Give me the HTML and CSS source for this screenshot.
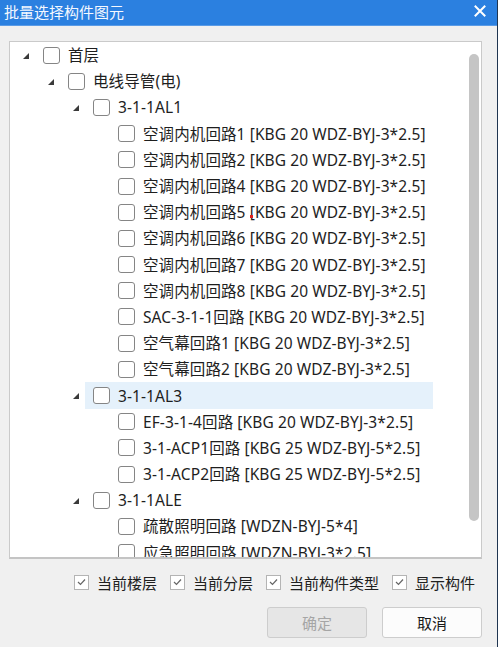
FILE: index.html
```html
<!DOCTYPE html>
<html>
<head>
<meta charset="utf-8">
<link rel="stylesheet" href="styles.css">
</head>
<body>
<div class="window">
  <div class="titlebar">
    <span class="title">批量选择构件图元</span>
    <svg class="close" width="12" height="12" viewBox="0 0 12 12"><path d="M1.5 1.5 L10.5 10.5 M10.5 1.5 L1.5 10.5" stroke="#fff" stroke-width="2" stroke-linecap="square"/></svg>
  </div>
  <div class="content">
    <div class="panel">
      <div class="tree">
        <div class="row l0"><span class="arrow"></span><span class="item"><span class="cb"></span><span class="label">首层</span></span></div>
        <div class="row l1"><span class="arrow"></span><span class="item"><span class="cb"></span><span class="label">电线导管(电)</span></span></div>
        <div class="row l2"><span class="arrow"></span><span class="item"><span class="cb"></span><span class="label">3-1-1AL1</span></span></div>
        <div class="row leaf"><span class="item"><span class="cb"></span><span class="label">空调内机回路1 [KBG 20 WDZ-BYJ-3*2.5]</span></span></div>
        <div class="row leaf"><span class="item"><span class="cb"></span><span class="label">空调内机回路2 [KBG 20 WDZ-BYJ-3*2.5]</span></span></div>
        <div class="row leaf"><span class="item"><span class="cb"></span><span class="label">空调内机回路4 [KBG 20 WDZ-BYJ-3*2.5]</span></span></div>
        <div class="row leaf"><span class="item"><span class="cb"></span><span class="label">空调内机回路5 [KBG 20 WDZ-BYJ-3*2.5]</span></span><span class="dot"></span></div>
        <div class="row leaf"><span class="item"><span class="cb"></span><span class="label">空调内机回路6 [KBG 20 WDZ-BYJ-3*2.5]</span></span></div>
        <div class="row leaf"><span class="item"><span class="cb"></span><span class="label">空调内机回路7 [KBG 20 WDZ-BYJ-3*2.5]</span></span></div>
        <div class="row leaf"><span class="item"><span class="cb"></span><span class="label">空调内机回路8 [KBG 20 WDZ-BYJ-3*2.5]</span></span></div>
        <div class="row leaf"><span class="item"><span class="cb"></span><span class="label">SAC-3-1-1回路 [KBG 20 WDZ-BYJ-3*2.5]</span></span></div>
        <div class="row leaf"><span class="item"><span class="cb"></span><span class="label">空气幕回路1 [KBG 20 WDZ-BYJ-3*2.5]</span></span></div>
        <div class="row leaf"><span class="item"><span class="cb"></span><span class="label">空气幕回路2 [KBG 20 WDZ-BYJ-3*2.5]</span></span></div>
        <div class="row l2"><span class="arrow"></span><span class="item sel"><span class="cb"></span><span class="label">3-1-1AL3</span></span></div>
        <div class="row leaf"><span class="item"><span class="cb"></span><span class="label">EF-3-1-4回路 [KBG 20 WDZ-BYJ-3*2.5]</span></span></div>
        <div class="row leaf"><span class="item"><span class="cb"></span><span class="label">3-1-ACP1回路 [KBG 25 WDZ-BYJ-5*2.5]</span></span></div>
        <div class="row leaf"><span class="item"><span class="cb"></span><span class="label">3-1-ACP2回路 [KBG 25 WDZ-BYJ-5*2.5]</span></span></div>
        <div class="row l2"><span class="arrow"></span><span class="item"><span class="cb"></span><span class="label">3-1-1ALE</span></span></div>
        <div class="row leaf"><span class="item"><span class="cb"></span><span class="label">疏散照明回路 [WDZN-BYJ-5*4]</span></span></div>
        <div class="row leaf"><span class="item"><span class="cb"></span><span class="label">应急照明回路 [WDZN-BYJ-3*2.5]</span></span></div>
      </div>
      <div class="thumb"></div>
    </div>
    <div class="options">
      <label class="opt"><span class="ck"><svg width="9" height="8" viewBox="0 0 9 8"><path d="M1 4 L3.5 6.5 L8 1.5" fill="none" stroke="#666" stroke-width="1.2"/></svg></span><span>当前楼层</span></label>
      <label class="opt"><span class="ck"><svg width="9" height="8" viewBox="0 0 9 8"><path d="M1 4 L3.5 6.5 L8 1.5" fill="none" stroke="#666" stroke-width="1.2"/></svg></span><span>当前分层</span></label>
      <label class="opt"><span class="ck"><svg width="9" height="8" viewBox="0 0 9 8"><path d="M1 4 L3.5 6.5 L8 1.5" fill="none" stroke="#666" stroke-width="1.2"/></svg></span><span>当前构件类型</span></label>
      <label class="opt"><span class="ck"><svg width="9" height="8" viewBox="0 0 9 8"><path d="M1 4 L3.5 6.5 L8 1.5" fill="none" stroke="#666" stroke-width="1.2"/></svg></span><span>显示构件</span></label>
    </div>
    <div class="buttons">
      <button class="btn disabled">确定</button>
      <button class="btn">取消</button>
    </div>
  </div>
</div>
</body>
</html>
```
FILE: styles.css
```css
html, body {
  margin: 0;
  padding: 0;
}
body {
  width: 498px;
  height: 647px;
  overflow: hidden;
  background: #f0f0f0;
  font-family: "Noto Sans", "Noto Sans CJK SC", sans-serif;
  color: #1e1e1e;
}
.window {
  width: 498px;
  height: 647px;
  box-sizing: border-box;
  border-right: 1px solid #1f3550;
  background: #f0f0f0;
}
.titlebar {
  height: 26px;
  background: #2b80e0;
  display: flex;
  align-items: center;
  justify-content: space-between;
  padding: 0 11px 0 4px;
  box-sizing: border-box;
  border-bottom: 1px solid #5a9be6;
}
.title {
  color: #f4f8ff;
  font-size: 15px;
  font-family: "Noto Sans CJK SC", sans-serif;
  line-height: 24px;
  margin-top: -2px;
}
.close {
  display: block;
  margin-top: -3px;
}
.content {
  padding: 15px 0 0 9px;
}
.panel {
  position: relative;
  width: 473px;
  height: 518px;
  box-sizing: border-box;
  background: #fff;
  border: 1px solid #cacaca;
  border-bottom: 2px solid #c4c4c4;
  overflow: hidden;
}
.tree {
  padding-top: 0;
}
.row {
  height: 26.2px;
  display: flex;
  align-items: center;
  font-size: 15.5px;
  letter-spacing: 0.1px;
  white-space: nowrap;
  position: relative;
}
.row.l0 { padding-left: 13px; }
.row.l1 { padding-left: 38px; }
.row.l2 { padding-left: 63px; }
.row.leaf { padding-left: 100px; }
.arrow {
  width: 0;
  height: 0;
  border-style: solid;
  border-width: 0 0 6px 6px;
  border-color: transparent transparent #3a3a3a transparent;
  margin-right: 6px;
  margin-top: 1px;
}
.item {
  display: flex;
  align-items: center;
  height: 100%;
  padding-left: 8px;
  box-sizing: border-box;
}
.item.sel {
  background: #e5f1fb;
  width: 348px;
}
.cb {
  width: 17px;
  height: 17px;
  box-sizing: border-box;
  border: 1px solid #858585;
  border-radius: 3px;
  background: #fff;
  margin-right: 8px;
  flex: none;
}
.label {
  line-height: 20px;
}
.dot {
  position: absolute;
  left: 240px;
  top: 16px;
  width: 3px;
  height: 3px;
  background: #e02020;
}
.thumb {
  position: absolute;
  right: 2px;
  top: 12px;
  width: 10px;
  height: 467px;
  border-radius: 5px;
  background: #c5c5c5;
}
.options {
  display: flex;
  align-items: center;
  height: 24px;
  margin-top: 11px;
  padding-left: 65px;
  gap: 13px;
  font-size: 15px;
  font-family: "Noto Sans CJK SC", sans-serif;
  color: #202020;
}
.opt {
  display: flex;
  align-items: center;
}
.ck {
  width: 15px;
  height: 15px;
  box-sizing: border-box;
  border: 1px solid #b4b4b4;
  background: #fff;
  margin-right: 8px;
  display: flex;
  align-items: center;
  justify-content: center;
}
.ck svg { display: block; }
.buttons {
  display: flex;
  justify-content: flex-end;
  gap: 15px;
  margin-top: 13px;
  width: 473px;
}
.btn {
  width: 100px;
  height: 31px;
  box-sizing: border-box;
  border: 1px solid #cdcdcd;
  border-radius: 3px;
  background: #fcfcfc;
  font-size: 15px;
  font-family: "Noto Sans CJK SC", sans-serif;
  color: #1a1a1a;
  padding: 0;
}
.btn.disabled {
  background: #e6e6e6;
  color: #a5a5a5;
}
```
